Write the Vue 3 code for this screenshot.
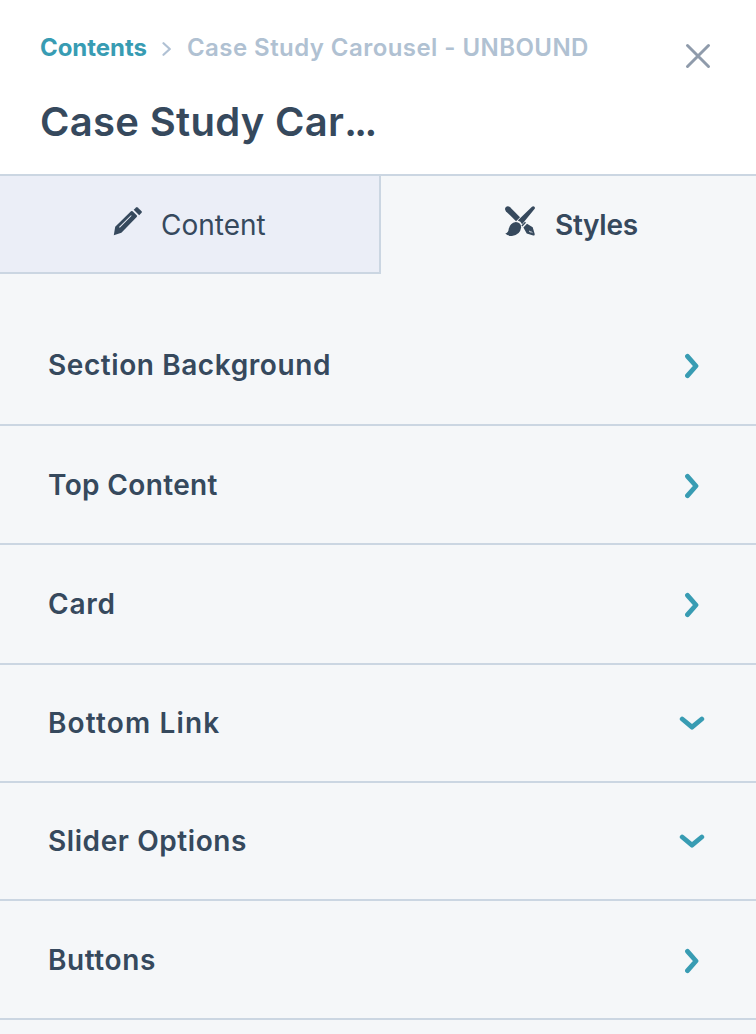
<template>
  <div class="panel">
    <header class="panel-header">
      <div class="heading">
        <nav class="breadcrumbs" aria-label="Breadcrumb">
          <a class="crumb-link">Contents</a>
          <svg class="crumb-arrow" viewBox="0 0 10 14" aria-hidden="true">
            <path d="M1.5 1.2 7.8 7l-6.3 5.8" />
          </svg>
          <span class="crumb-current">Case Study Carousel - UNBOUND</span>
        </nav>
        <h1 class="title">Case Study Car<span class="dots">...</span></h1>
      </div>
      <button class="close" type="button" aria-label="Close">
        <svg viewBox="0 0 26 26" aria-hidden="true">
          <path d="M2.5 2.5l21 21M23.5 2.5l-21 21" />
        </svg>
      </button>
    </header>

    <div class="tabs" role="tablist">
      <button
        class="tab tab--content"
        :class="{ 'tab--active': activeTab === 'content' }"
        type="button"
        role="tab"
        @click="activeTab = 'content'"
      >
        <svg class="tab-icon" viewBox="0 0 30 30" aria-hidden="true">
          <path
            fill-rule="evenodd"
            d="M0.8 29.2 2.2 20.8 18 5.3Q18.9 4.6 19.6 5.3L23.9 9.6Q24.4 10.3 23.7 10.9L8.4 26.8ZM6 21.1 6.8 21.8 18.4 10.1Q18.7 9.7 18.4 9.4 18.1 9 17.7 9.4Z"
          />
          <path d="M20.7 3.8 23.1 1.4Q23.9.7 24.7 1.4L28.6 5.3Q29.3 6 28.6 6.8L26.2 9.2Z" />
        </svg>
        <span class="tab-label">Content</span>
      </button>
      <button
        class="tab tab--styles"
        :class="{ 'tab--active': activeTab === 'styles' }"
        type="button"
        role="tab"
        @click="activeTab = 'styles'"
      >
        <svg class="tab-icon" viewBox="0 0 30 30" aria-hidden="true">
          <!-- pen -->
          <path d="M.9 1.1Q2.9-.7 5.1 1.3L15 11.2 11.1 15.2 1 5.4Q-.9 3.1.9 1.1Z" />
          <path d="M16.4 19.5 20 15.8 21 16.8 17.4 20.5Z" />
          <path
            fill-rule="evenodd"
            d="M18.4 21.4 22 17.7 27.7 21.3 29.7 28Q30 29.9 28.2 29.5L21.7 27.5ZM24.5 24.4A1.2 1.2 0 1 0 26.2 24.3L27.8 27.5Z"
          />
          <!-- brush -->
          <path d="M12.8 14.5 26.7.9Q28.2-.4 29.4.7 30.5 1.9 29.3 3.3L17.1 18.2Q15.8 15.3 12.8 14.5Z" />
          <path d="M10.8 16Q15.9 16.4 16.2 21.2 15.1 29.1 7 29.9 2.4 30.1.3 27.6 3.4 27 3.7 23.1 5 16.8 10.8 16Z" />
        </svg>
        <span class="tab-label">Styles</span>
      </button>
    </div>

    <ul class="sections">
      <li
        v-for="section in sections"
        :key="section.label"
        class="section"
        :class="'section--' + section.id"
      >
        <span class="section-label">{{ section.label }}</span>
        <svg
          class="chevron"
          :class="{ 'chevron--down': section.inline }"
          viewBox="0 0 26 26"
          aria-hidden="true"
        >
          <path v-if="section.inline" d="M3.2 8 13 16.2 22.8 8" />
          <path v-else d="M8.5 3.3 17 13 8.5 22.7" />
        </svg>
      </li>
    </ul>
  </div>
</template>

<script setup>
import { ref } from "vue";

const activeTab = ref("styles");

const sections = [
  { id: "background", label: "Section Background", inline: false },
  { id: "top", label: "Top Content", inline: false },
  { id: "card", label: "Card", inline: false },
  { id: "link", label: "Bottom Link", inline: true },
  { id: "slider", label: "Slider Options", inline: true },
  { id: "buttons", label: "Buttons", inline: false },
];
</script>

<style>
body {
  margin: 0;
  background: #f5f7f9;
}
</style>

<style scoped>
.panel {
  min-height: 1034px;
  box-sizing: border-box;
  background: #f5f7f9;
  color: #36495d;
  font-family: Inter, "Liberation Sans", sans-serif;
  white-space: nowrap;
}
button {
  border: 0;
  padding: 0;
  background: none;
  color: inherit;
  font: inherit;
}
svg {
  display: block;
  flex: none;
}
.panel-header {
  display: flex;
  justify-content: space-between;
  box-sizing: border-box;
  height: 176px;
  padding: 31px 45px 0 40px;
  background: #fff;
  border-bottom: 2px solid #cbd6e2;
}
.breadcrumbs {
  display: flex;
  align-items: center;
  height: 32px;
  font-size: 24px;
  font-weight: 600;
}
.crumb-link {
  width: 107px;
  color: #389cb3;
  font-weight: 700;
  letter-spacing: -0.05px;
}
.crumb-arrow {
  width: 10px;
  height: 14px;
  margin: 3px 15px 0 15px;
  fill: none;
  stroke: #b0c1d4;
  stroke-width: 2.2;
  stroke-linecap: round;
  stroke-linejoin: round;
}
.crumb-current {
  color: #b0c1d2;
  letter-spacing: 0.44px;
}
.title {
  margin: 33px 0 0;
  font-size: 40px;
  line-height: 52px;
  font-weight: 600;
  letter-spacing: 0.3px;
}
.dots {
  letter-spacing: -2.6px;
}
.close {
  width: 26px;
  height: 26px;
  margin-top: 12px;
}
.close path {
  fill: none;
  stroke: #8f9bab;
  stroke-width: 3;
  stroke-linecap: round;
}
.tabs {
  display: flex;
  height: 98px;
}
.tab {
  display: flex;
  align-items: center;
  box-sizing: border-box;
  padding-bottom: 2px;
  font-size: 28px;
}
.tab--content {
  width: 381px;
  padding-left: 113px;
  background: #ebeef7;
  border-right: 2px solid #cbd6e2;
  border-bottom: 2px solid #cbd6e2;
  padding-bottom: 0;
}
.tab--styles {
  flex: 1;
  padding-left: 124px;
}
.tab--active {
  font-weight: 600;
  letter-spacing: -0.3px;
}
.tab-icon {
  width: 30px;
  height: 30px;
  margin: 0 18px 6px 0;
  fill: #36495d;
}
.tab--styles .tab-icon {
  margin-right: 20px;
}
.tab-label {
  padding-top: 2px;
}
.sections {
  display: grid;
  grid-template-rows: 120px 119px 120px 118px 118px 119px;
  margin: 0;
  padding: 32px 0 0;
  list-style: none;
}
.section {
  display: flex;
  align-items: center;
  justify-content: space-between;
  padding: 0 51px 0 48px;
  border-bottom: 2px solid #cbd6e2;
  font-size: 28px;
  font-weight: 600;
  letter-spacing: 0.58px;
}
.section--top {
  letter-spacing: 0.36px;
}
.section--card {
  letter-spacing: 0.8px;
}
.section--link {
  letter-spacing: 1.15px;
}
.chevron {
  width: 26px;
  height: 26px;
  margin-top: 2px;
  fill: none;
  stroke: #389cb3;
  stroke-width: 4.8;
  stroke-linecap: round;
  stroke-linejoin: round;
}
.chevron--down {
  margin-top: 1px;
}
</style>
